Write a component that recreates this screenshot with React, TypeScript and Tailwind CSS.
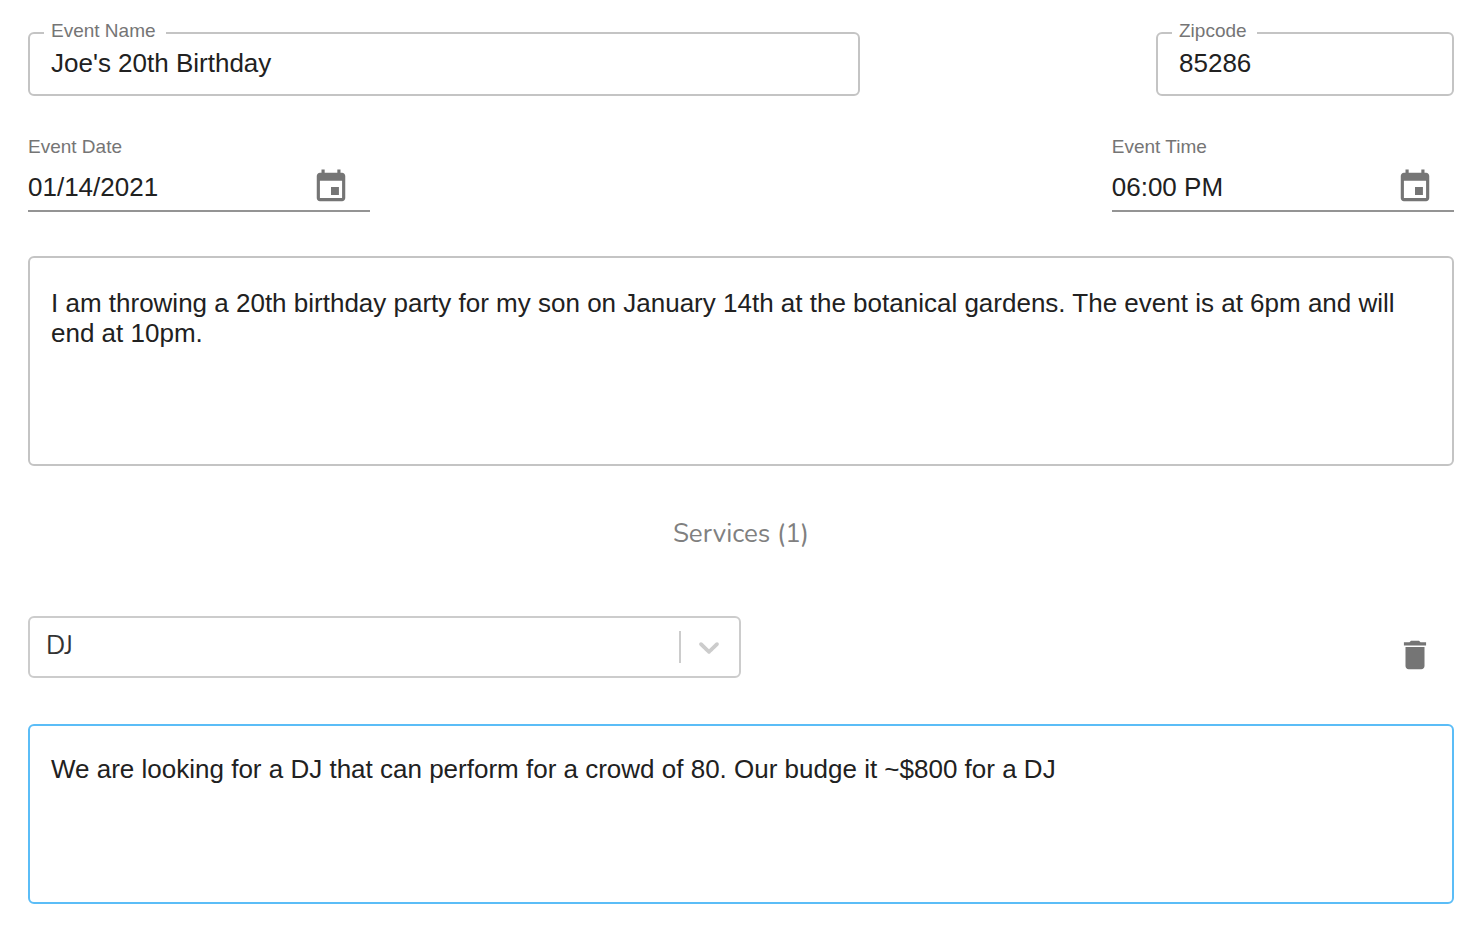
import { useState } from 'react';

type FieldProps = { id: string; label: string; initial: string; className: string };

function OutlinedField({ id, label, initial, className }: FieldProps) {
  const [value, setValue] = useState(initial);
  return (
    <fieldset className={`min-w-0 rounded-md border-2 border-[#c4c4c4] px-3.5 pb-3 ${className}`}>
      <legend className="pr-2.5 pb-1 pl-[7px] text-[19px] leading-[18px] text-[#757575]">
        <label htmlFor={id}>{label}</label>
      </legend>
      <input
        id={id}
        type="text"
        value={value}
        onChange={(e) => setValue(e.target.value)}
        className="block h-[38px] w-full bg-transparent px-[7px] text-[26px] outline-none"
      />
    </fieldset>
  );
}

function CalendarIcon() {
  return (
    <svg viewBox="0 0 24 24" className="size-[38px] fill-[#757575]" aria-hidden="true">
      <path d="M17 12h-5v5h5v-5zM16 1v2H8V1H6v2H5c-1.11 0-1.99.9-1.99 2L3 19c0 1.1.89 2 2 2h14c1.1 0 2-.9 2-2V5c0-1.1-.9-2-2-2h-1V1h-2zm3 18H5V8h14v11z" />
    </svg>
  );
}

function PickerField({ id, label, initial, className }: FieldProps) {
  const [value, setValue] = useState(initial);
  return (
    <div className={className}>
      <label htmlFor={id} className="block text-[19px] leading-[22px] text-[#757575]">
        {label}
      </label>
      <div className="flex items-center border-b-2 border-[#949494] pt-2.5 pr-5 pb-1">
        <input
          id={id}
          type="text"
          value={value}
          onChange={(e) => setValue(e.target.value)}
          className="h-[38px] min-w-0 flex-1 bg-transparent text-[26px] outline-none"
        />
        <button type="button" aria-label={`Choose ${label.toLowerCase()}`}>
          <CalendarIcon />
        </button>
      </div>
    </div>
  );
}

export default function App() {
  const [description, setDescription] = useState(
    'I am throwing a 20th birthday party for my son on January 14th at the botanical gardens. The event is at 6pm and will end at 10pm.',
  );
  const [details, setDetails] = useState(
    'We are looking for a DJ that can perform for a crowd of 80. Our budge it ~$800 for a DJ',
  );

  return (
    <form className="bg-white px-7 pt-[22px] pb-9 font-['Liberation_Sans',Arial,sans-serif] text-[#212121]">
      <div className="flex justify-between gap-6">
        <OutlinedField id="name" label="Event Name" initial="Joe's 20th Birthday" className="w-7/12" />
        <OutlinedField id="zip" label="Zipcode" initial="85286" className="w-[298px]" />
      </div>

      <div className="mt-10 flex justify-between gap-6">
        <PickerField id="date" label="Event Date" initial="01/14/2021" className="w-[24%]" />
        <PickerField id="time" label="Event Time" initial="06:00 PM" className="w-[24%]" />
      </div>

      <textarea
        aria-label="Event description"
        value={description}
        onChange={(e) => setDescription(e.target.value)}
        className="mt-11 block h-[210px] w-full resize-none rounded-md border-2 border-[#c4c4c4] px-[21px] py-[30px] text-[26px] leading-[30px] outline-none"
      />

      <h2 className="mt-[50px] text-center font-['Nunito','Lato',sans-serif] text-[26px] leading-9 text-[#808080]">
        Services (1)
      </h2>

      <div className="mt-16 flex items-end justify-between">
        <div className="flex h-[62px] w-1/2 items-center rounded-md border-2 border-[#cccccc] pr-[13px]">
          <select
            aria-label="Service"
            defaultValue="DJ"
            className="h-full min-w-0 flex-1 appearance-none bg-transparent pb-1 pl-4 font-['Nunito','Lato',sans-serif] text-[26px] text-[#333333] outline-none"
          >
            <option>DJ</option>
          </select>
          <span className="mr-[11px] h-8 w-0.5 bg-[#cccccc]" />
          <svg viewBox="0 0 20 20" className="size-[34px] fill-[#cccccc]" aria-hidden="true">
            <path d="M4.516 7.548c0.436-0.446 1.043-0.481 1.576 0l3.908 3.747 3.908-3.747c0.533-0.481 1.141-0.446 1.574 0 0.436 0.445 0.408 1.197 0 1.615-0.406 0.418-4.695 4.502-4.695 4.502-0.217 0.223-0.502 0.335-0.787 0.335s-0.57-0.112-0.789-0.335c0 0-4.287-4.084-4.695-4.502s-0.436-1.17 0-1.615z" />
          </svg>
        </div>
        <button type="button" aria-label="Delete service" className="pr-5 pb-1">
          <svg viewBox="0 0 24 24" className="size-[38px] fill-[#757575]" aria-hidden="true">
            <path d="M6 19c0 1.1.9 2 2 2h8c1.1 0 2-.9 2-2V7H6v12zM19 4h-3.5l-1-1h-5l-1 1H5v2h14V4z" />
          </svg>
        </button>
      </div>

      <textarea
        aria-label="Service details"
        value={details}
        onChange={(e) => setDetails(e.target.value)}
        className="mt-[46px] block h-[180px] w-full resize-none rounded-md border-2 border-[#5bbdf7] px-[21px] py-7 text-[26px] leading-[30px] outline-none"
      />
    </form>
  );
}
